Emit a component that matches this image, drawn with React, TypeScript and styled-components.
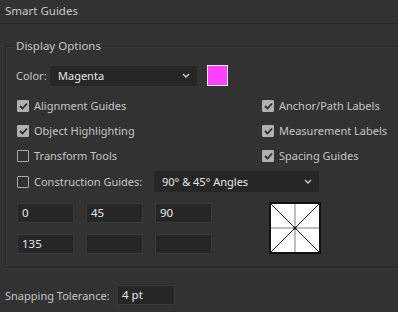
import React from "react";
import styled, { createGlobalStyle } from "styled-components";

const Global = createGlobalStyle`
  html, body { margin: 0; padding: 0; background: #323232; overflow: hidden; }
  body { font-family: "Noto Sans", "Open Sans", sans-serif; font-size: 11px; color: #c6c6c6; }
  * { box-sizing: border-box; }
`;

const Page = styled.div`
  width: 398px;
  height: 312px;
  display: flex;
  flex-direction: column;
  overflow: hidden;
`;

const Header = styled.div`
  height: 24px;
  padding: 3px 0 0 5px;
  line-height: 16px;
  font-size: 11.5px;
  color: #c8c8c8;
  border-bottom: 1px solid #282828;
`;

const Group = styled.div`
  position: relative;
  margin: 22px 0 0 5px;
  border: 1px solid #282828;
  border-right: none;
  box-shadow: inset 1px 1px 0 #3a3a3a, 0 1px 0 #3a3a3a;
  padding: 18px 0 13px 10px;
  display: flex;
  flex-direction: column;
`;

const Legend = styled.div`
  position: absolute;
  top: -9px;
  left: 8px;
  padding: 0 2px;
  line-height: 16px;
  font-size: 11.5px;
  background: #323232;
  color: #c6c6c6;
`;

const ColorRow = styled.div`
  display: grid;
  grid-template-columns: 34px 147px 31px;
  align-items: center;
`;

const Label = styled.span`
  color: #c6c6c6;
  white-space: nowrap;
`;

const Select = styled.div<{ $h?: number }>`
  height: ${(p) => p.$h ?? 20}px;
  background: #262626;
  border-radius: 2px;
  display: flex;
  align-items: center;
  justify-content: space-between;
  padding: 0 7px 0 8px;
  color: #e6e6e6;
`;

const Swatch = styled.div`
  width: 21px;
  height: 21px;
  margin-left: 10px;
  border: 1px solid #f0f0f0;
  background: #ff40ff;
`;

const Checks = styled.div`
  display: grid;
  grid-template-columns: 245px auto;
  grid-auto-rows: 25px;
  margin-top: 7px;
  padding-left: 1px;
`;

const CheckItem = styled.label`
  display: flex;
  align-items: center;
  gap: 5px;
`;

const Box = styled.span<{ $on: boolean }>`
  width: 12px;
  height: 12px;
  border-radius: 1px;
  display: flex;
  align-items: center;
  justify-content: center;
  background: ${(p) => (p.$on ? "#b0b0b0" : "transparent")};
  border: 1px solid ${(p) => (p.$on ? "#b0b0b0" : "#a8a8a8")};
`;

const Chevron = () => (
  <svg width="8" height="5" viewBox="0 0 8 5">
    <path d="M1 1 L4 4 L7 1" fill="none" stroke="#d0d0d0" strokeWidth="1.3" />
  </svg>
);

const Tick = () => (
  <svg width="9" height="8" viewBox="0 0 9 8">
    <path d="M1 4 L3.5 6.5 L8 1.5" fill="none" stroke="#2e2e2e" strokeWidth="1.8" />
  </svg>
);

const Check = ({ on, label }: { on: boolean; label: string }) => (
  <CheckItem>
    <Box $on={on}>{on && <Tick />}</Box>
    <Label>{label}</Label>
  </CheckItem>
);

const ConstructionRow = styled.div`
  display: grid;
  grid-template-columns: 137px 165px;
  align-items: center;
  margin-top: 3px;
  padding-left: 1px;
`;

const Lower = styled.div`
  display: flex;
  align-items: flex-start;
  gap: 57px;
  margin-top: 11px;
  padding-left: 1px;
`;

const Fields = styled.div`
  display: grid;
  grid-template-columns: repeat(3, 57px);
  grid-auto-rows: 20px;
  column-gap: 12px;
  row-gap: 11px;
`;

const Field = styled.div<{ $w?: number }>`
  width: ${(p) => (p.$w ? p.$w + "px" : "auto")};
  height: 20px;
  background: #262626;
  border: 1px solid #3a3a3a;
  border-radius: 2px;
  color: #e6e6e6;
  padding-left: 4px;
  line-height: 18px;
  font-size: 11.5px;
`;

const Diagram = styled.svg`
  margin-top: -1px;
  display: block;
`;

const Snap = styled.div`
  display: grid;
  grid-template-columns: 112px 58px;
  align-items: center;
  margin-top: 17px;
  padding-left: 5px;
`;

export default function App() {
  return (
    <Page>
      <Global />
      <Header>Smart Guides</Header>
      <Group>
        <Legend>Display Options</Legend>
        <ColorRow>
          <Label>Color:</Label>
          <Select>
            <span>Magenta</span>
            <Chevron />
          </Select>
          <Swatch />
        </ColorRow>
        <Checks>
          <Check on label="Alignment Guides" />
          <Check on label="Anchor/Path Labels" />
          <Check on label="Object Highlighting" />
          <Check on label="Measurement Labels" />
          <Check on={false} label="Transform Tools" />
          <Check on label="Spacing Guides" />
        </Checks>
        <ConstructionRow>
          <Check on={false} label="Construction Guides:" />
          <Select $h={21}>
            <span>90° &amp; 45° Angles</span>
            <Chevron />
          </Select>
        </ConstructionRow>
        <Lower>
          <Fields>
            <Field>0</Field>
            <Field>45</Field>
            <Field>90</Field>
            <Field>135</Field>
            <Field />
            <Field />
          </Fields>
          <Diagram width="52" height="52" viewBox="0 0 52 52">
            <rect x="1" y="1" width="50" height="50" fill="#ffffff" stroke="#111" strokeWidth="2" />
            <line x1="26" y1="2" x2="26" y2="50" stroke="#bdbdbd" strokeWidth="2" />
            <line x1="2" y1="26" x2="50" y2="26" stroke="#bdbdbd" strokeWidth="2" />
            <line x1="2" y1="2" x2="50" y2="50" stroke="#222" strokeWidth="1" />
            <line x1="50" y1="2" x2="2" y2="50" stroke="#222" strokeWidth="1" />
            <circle cx="26" cy="26" r="1.5" fill="#111" />
          </Diagram>
        </Lower>
      </Group>
      <Snap>
        <Label>Snapping Tolerance:</Label>
        <Field $w={58}>4 pt</Field>
      </Snap>
    </Page>
  );
}
